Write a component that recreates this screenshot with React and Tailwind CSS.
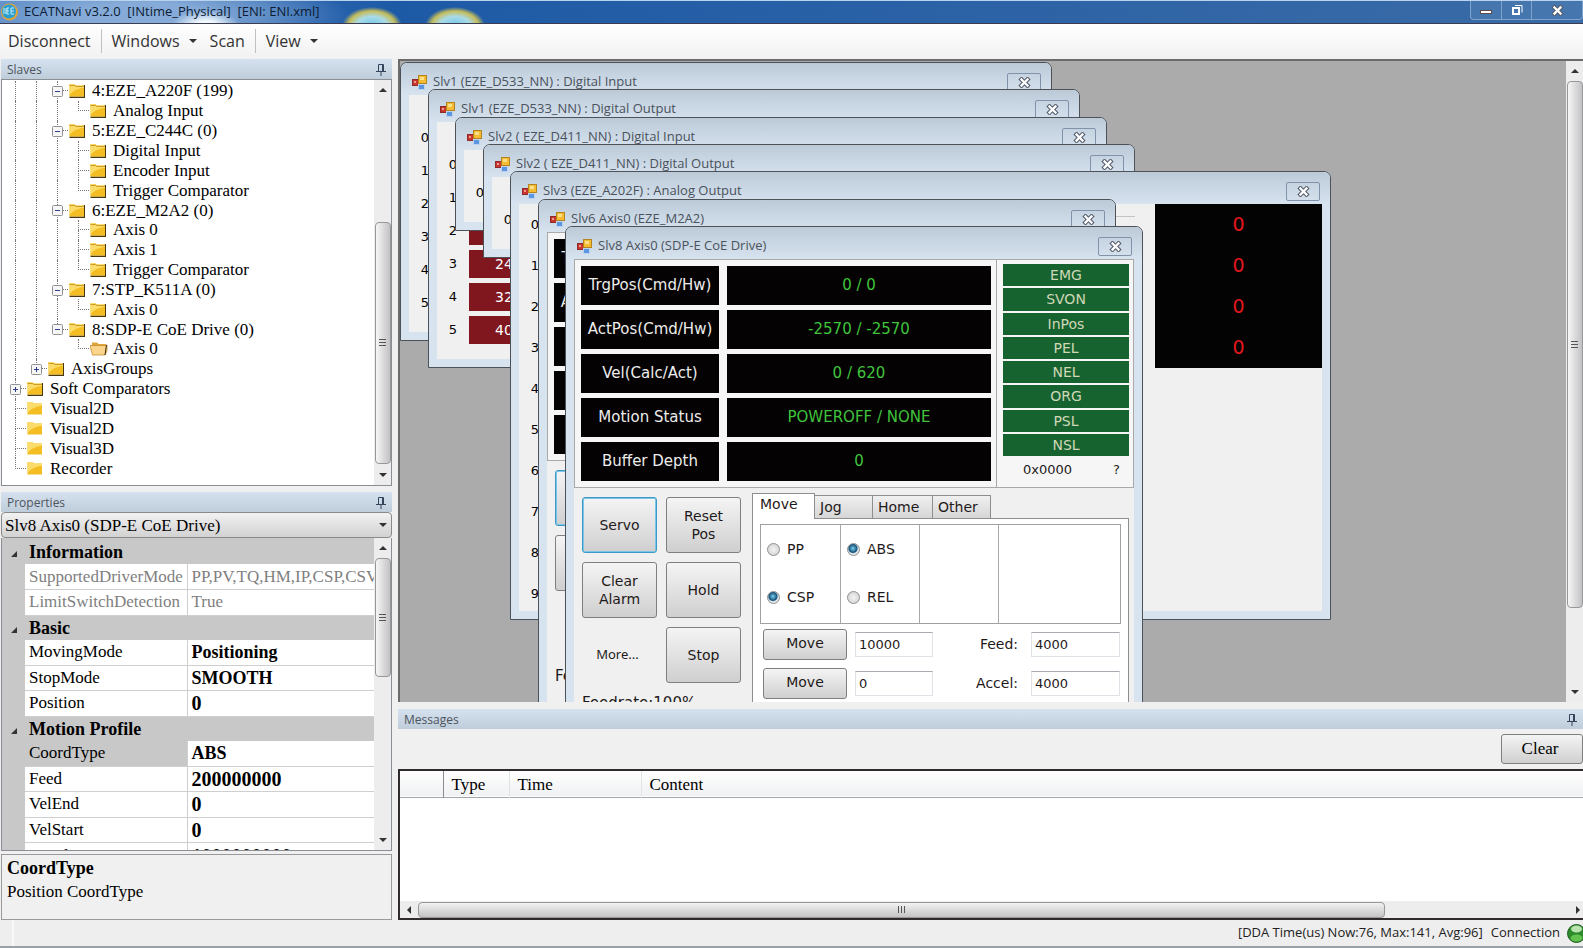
import { useId, useState } from 'react'
import clsx from 'clsx'

const TREE = [
  { lines: [1, 1], node: 'minus', label: '4:EZE_A220F (199)' },
  { lines: [1, 1, 1], node: 'last', label: 'Analog Input' },
  { lines: [1, 1], node: 'minus', label: '5:EZE_C244C (0)' },
  { lines: [1, 1, 1], node: 'mid', label: 'Digital Input' },
  { lines: [1, 1, 1], node: 'mid', label: 'Encoder Input' },
  { lines: [1, 1, 1], node: 'last', label: 'Trigger Comparator' },
  { lines: [1, 1], node: 'minus', label: '6:EZE_M2A2 (0)' },
  { lines: [1, 1, 1], node: 'mid', label: 'Axis 0' },
  { lines: [1, 1, 1], node: 'mid', label: 'Axis 1' },
  { lines: [1, 1, 1], node: 'last', label: 'Trigger Comparator' },
  { lines: [1, 1], node: 'minus', label: '7:STP_K511A (0)' },
  { lines: [1, 1, 1], node: 'last', label: 'Axis 0' },
  { lines: [1, 1], node: 'minus', last: true, label: '8:SDP-E CoE Drive (0)' },
  { lines: [1, 1, 0], node: 'last', icon: 'open', label: 'Axis 0' },
  { lines: [1], node: 'plus', last: true, label: 'AxisGroups' },
  { lines: [], node: 'plus', label: 'Soft Comparators' },
  { lines: [], node: 'mid', icon: 'flat', label: 'Visual2D' },
  { lines: [], node: 'mid', icon: 'flat', label: 'Visual2D' },
  { lines: [], node: 'mid', icon: 'flat', label: 'Visual3D' },
  { lines: [], node: 'last', icon: 'flat', label: 'Recorder' },
]

const PROPERTIES = [
  { group: 'Information' },
  { name: 'SupportedDriverMode', value: 'PP,PV,TQ,HM,IP,CSP,CSV', readOnly: true },
  { name: 'LimitSwitchDetection', value: 'True', readOnly: true },
  { group: 'Basic' },
  { name: 'MovingMode', value: 'Positioning' },
  { name: 'StopMode', value: 'SMOOTH' },
  { name: 'Position', value: 0 },
  { group: 'Motion Profile' },
  { name: 'CoordType', value: 'ABS', selected: true },
  { name: 'Feed', value: 200000000 },
  { name: 'VelEnd', value: 0 },
  { name: 'VelStart', value: 0 },
  { name: 'Accel', value: 1000000000 },
]

const READOUTS = [
  ['TrgPos(Cmd/Hw)', '0 / 0'],
  ['ActPos(Cmd/Hw)', '-2570 / -2570'],
  ['Vel(Calc/Act)', '0 / 620'],
  ['Motion Status', 'POWEROFF / NONE'],
  ['Buffer Depth', '0'],
]

const SIGNALS = ['EMG', 'SVON', 'InPos', 'PEL', 'NEL', 'ORG', 'PSL', 'NSL']

const PinIcon = () => (
  <svg width="10" height="13" viewBox="0 0 10 13" fill="none" stroke="#33435c" aria-hidden>
    <path d="M2.5 8V1.5h5V8M0 8.5h10M5 9v4" />
    <path d="M6.5 2v6" />
  </svg>
)

const FormIcon = () => (
  <svg width="16" height="15" viewBox="0 0 16 15" aria-hidden>
    <rect x="0.5" y="4.5" width="6" height="6" fill="#c8352f" stroke="#8e2a2a" />
    <rect x="2" y="6" width="2" height="2" fill="#ee9a8c" />
    <rect x="6.5" y="9.5" width="6" height="5" fill="#5b96e0" stroke="#bcd2ee" />
    <rect x="6.5" y="0.5" width="8" height="8" fill="#f5bc33" stroke="#b38420" />
    <rect x="8" y="2" width="4" height="3" fill="#fbe08a" />
  </svg>
)

const CloseGlyph = () => (
  <svg width="13" height="11" viewBox="0 0 13 11" aria-hidden>
    <path d="M3.500 2.500l6 6M9.500 2.500l-6 6" stroke="#555c6b" strokeWidth="4.400" strokeLinecap="square" />
    <path d="M3.500 2.500l6 6M9.500 2.500l-6 6" stroke="#fff" strokeWidth="2.300" strokeLinecap="square" />
  </svg>
)

const FolderIcon = ({ kind }) => {
  if (kind === 'open') {
    return (
      <svg width="18" height="15" viewBox="0 0 18 15" aria-hidden>
        <path d="M2 3V1.500h5L8.500 3H16v10H3z" fill="#e0a63c" />
        <path d="M0 4.500h14.500L17 4v6l-2 4H2.500z" fill="#f9d48a" stroke="#c58b2c" strokeWidth="0.8" />
        <path d="M16.500 4L15 14" stroke="#3a2c10" />
      </svg>
    )
  }
  return (
    <svg width="16" height="15" viewBox="0 0 16 15" aria-hidden>
      {kind !== 'flat' && <path d="M0.500 14.200h15V2" fill="none" stroke="#4a380c" strokeWidth="1.400" />}
      <path d="M0.500 1h5l1 1.500H15v11H0.500z" fill="#f4bd22" />
      <path d="M0.500 1h5l1 1.500H15V5C10 5 5 7 0.500 12z" fill="#fbdc6a" />
      {kind !== 'flat' && <path d="M0.500 2.500h5L7 3.500h8" fill="none" stroke="#c08a14" strokeWidth="0.800" />}
    </svg>
  )
}

const Triangle = ({ dir, className }) => {
  const paths = {
    up: 'M0 6L4 2L8 6z',
    down: 'M0 2L4 6L8 2z',
    left: 'M6 0L2 4L6 8z',
    right: 'M2 0L6 4L2 8z',
    corner: 'M7 1V7H1z',
  }
  return (
    <svg width="8" height="8" viewBox="0 0 8 8" fill="#333" className={className} aria-hidden>
      <path d={paths[dir]} />
    </svg>
  )
}

const Grip = ({ vertical }) => (
  <span
    className={clsx(
      'flex gap-[2px] [&>i]:bg-[#555]',
      vertical ? 'flex-col [&>i]:h-px [&>i]:w-[7px]' : '[&>i]:h-[7px] [&>i]:w-px',
    )}
  >
    <i />
    <i />
    <i />
  </span>
)

// thumb position is given as flex weights: space before, thumb, space after
const VScroll = ({ before, thumb, after }) => (
  <div className="flex w-[17px] shrink-0 flex-col items-center bg-[#ededee]" aria-hidden>
    <span className="flex h-5 items-center">
      <Triangle dir="up" />
    </span>
    <span style={{ flexGrow: before }} />
    <span
      style={{ flexGrow: thumb }}
      className="flex w-4 items-center justify-center rounded-sm border border-[#979797] bg-linear-to-r from-[#f6f6f6] via-[#dcdcde] to-[#c2c2c6]"
    >
      <Grip vertical />
    </span>
    <span style={{ flexGrow: after }} />
    <span className="flex h-5 items-center">
      <Triangle dir="down" />
    </span>
  </div>
)

const DockHeader = ({ title }) => (
  <div className="flex h-5 shrink-0 items-center justify-between bg-linear-to-b from-[#d5e1ee] to-[#bfcddb] px-[6px] pt-px font-['Open_Sans',sans-serif] text-[12px] text-[#4c545e]">
    <h2>{title}</h2>
    <button type="button" aria-label={`Pin ${title}`}>
      <PinIcon />
    </button>
  </div>
)

const TitleBar = () => (
  <header className="relative flex h-[24px] shrink-0 items-center overflow-hidden border-t border-b border-t-[#b9d3ee] border-b-[#3b3b52] bg-linear-to-r from-[#4d80bf] via-[#1d5aa6] via-25% to-[#3a6ba6] pl-px">
    <div
      className="absolute inset-0 bg-[radial-gradient(ellipse_34px_16px_at_206px_25px,#f2f9fd_30%,transparent),radial-gradient(ellipse_210px_40px_at_140px_14px,#86abd8_30%,transparent),radial-gradient(ellipse_30px_19px_at_372px_25px,#6fc3e6,#a9dbe8_50%,#c4bd5c_78%,transparent),radial-gradient(ellipse_30px_19px_at_455px_25px,#6fc3e6,#a9dbe8_50%,#c4bd5c_78%,transparent)]"
      aria-hidden
    />
    <svg width="17" height="20" viewBox="0 0 17 20" className="relative" aria-hidden>
      <circle cx="8.500" cy="10" r="8.500" fill="#e0a53a" />
      <circle cx="8" cy="9.500" r="7" fill="#2a9fd0" />
      <path d="M3 6v6M5 6v6M8 6h-2v6h2M6 9h2M13 6h-3v6h3M10 9h3" stroke="#c7ecf8" fill="none" />
    </svg>
    <h1 className="relative ml-[6px] flex-1 whitespace-pre font-['Open_Sans',sans-serif] text-[13px] text-[#0c1c33]">
      {'ECATNavi v3.2.0  [INtime_Physical]  [ENI: ENI.xml]'}
    </h1>
    <div className="relative flex h-[19px] self-start rounded-b border-x border-b border-[#7fa3cf] bg-[#4576ae]">
      <button type="button" aria-label="Minimize" className="flex w-[31px] items-center justify-center border-r border-[#7fa3cf]">
        <span className="mt-1 h-[4px] w-3 border border-[#5f4a4a] bg-white" />
      </button>
      <button type="button" aria-label="Restore" className="flex w-[30px] items-center justify-center border-r border-[#7fa3cf]">
        <svg width="12" height="12" viewBox="0 0 12 12" fill="none" aria-hidden>
          <path d="M4 1.500h7v7" stroke="#fff" />
          <rect x="2" y="4" width="6" height="6" stroke="#fff" strokeWidth="2" />
        </svg>
      </button>
      <button type="button" aria-label="Close" className="flex w-[50px] items-center justify-center">
        <CloseGlyph />
      </button>
    </div>
  </header>
)

const MenuBar = () => (
  <nav className="flex h-[35px] shrink-0 items-center bg-linear-to-b from-white to-[#f1f1f1] pb-[2px] pl-2 font-['Open_Sans',sans-serif] text-[16px] text-[#333]">
    <button type="button">Disconnect</button>
    <span className="mx-[10px] h-6 w-px bg-[#c0c0c0]" />
    <button type="button" className="flex items-center gap-[9px]">
      Windows
      <Triangle dir="down" />
    </button>
    <button type="button" className="ml-[13px]">Scan</button>
    <span className="mx-[10px] h-6 w-px bg-[#c0c0c0]" />
    <button type="button" className="flex items-center gap-[9px]">
      View
      <Triangle dir="down" />
    </button>
  </nav>
)

const Branch = ({ node, last }) => (
  <span className="relative flex w-[21px] flex-col pl-[10px]">
    <span className="flex-1 border-b border-l border-dotted border-[#777]" />
    <span className={clsx('flex-1', node !== 'last' && !last && 'border-l border-dotted border-[#777]')} />
    {(node === 'minus' || node === 'plus') && (
      <svg width="11" height="11" viewBox="0 0 11 11" className="absolute left-[5px] top-[5px]" aria-hidden>
        <rect x="0.500" y="0.500" width="10" height="10" rx="1" fill="#f6f6f6" stroke="#919191" />
        <path d={node === 'minus' ? 'M3 5.500h5' : 'M3 5.500h5M5.500 3v5'} stroke="#2c3f8f" />
      </svg>
    )}
  </span>
)

const TreeRow = ({ lines, node, last, icon, label }) => (
  <li className="flex min-h-0">
    {lines.map((on, i) => (
      <span key={i} className="flex w-[21px] pl-[10px]">
        <span className={clsx('flex-1', on === 1 && 'border-l border-dotted border-[#777]')} />
      </span>
    ))}
    <Branch node={node} last={last} />
    <button type="button" className="flex items-center whitespace-nowrap">
      <span className="flex w-[24px] pl-px">
        <FolderIcon kind={icon} />
      </span>
      {label}
    </button>
  </li>
)

const SlavesPanel = () => (
  <section className="flex min-h-0 flex-1 flex-col">
    <DockHeader title="Slaves" />
    <div className="flex min-h-0 flex-1 border border-[#8a8f96] bg-white">
      <ul className="mt-px grid h-[397px] flex-1 auto-rows-fr pl-[3px] text-[17px] leading-[19px]">
        {TREE.map((row, i) => (
          <TreeRow key={i} {...row} />
        ))}
      </ul>
      <VScroll before={126} thumb={241} after={1} />
    </div>
  </section>
)

const PropertyGrid = () => (
  <div className="flex h-[313px] overflow-hidden border border-t-0 border-[#8a8f96]">
    <div className="min-w-0 flex-1 overflow-hidden bg-[#c8c8c8] pt-[2px]">
      <table className="h-[329px] w-full table-fixed border-collapse text-[17px] leading-[22px]">
        <colgroup>
          <col className="w-[23px]" />
          <col className="w-[162px]" />
          <col />
        </colgroup>
        <tbody>
          {PROPERTIES.map((p) =>
            p.group ? (
              <tr key={p.group} className="bg-[#c8c8c8]">
                <td className="p-0">
                  <Triangle dir="corner" className="ml-[8px] mt-1" />
                </td>
                <th colSpan={2} className="p-0 pl-[4px] text-left text-[18px] font-bold">{p.group}</th>
              </tr>
            ) : (
              <tr key={p.name} className={clsx('bg-white', p.readOnly && 'text-[#808080]')}>
                <td className="bg-[#c8c8c8] p-0" />
                <th
                  className={clsx(
                    'overflow-hidden border-b border-r border-[#cfcfcf] p-0 pl-[4px] text-left font-normal',
                    p.selected && 'bg-[#c8c8c8]',
                  )}
                >
                  {p.name}
                </th>
                <td
                  className={clsx(
                    'overflow-hidden whitespace-nowrap border-b border-[#cfcfcf] p-0 pl-[4px]',
                    !p.readOnly && 'font-bold',
                    typeof p.value === 'number' ? 'text-[20px]' : !p.readOnly && 'text-[18px]',
                  )}
                >
                  {p.value}
                </td>
              </tr>
            ),
          )}
        </tbody>
      </table>
    </div>
    <VScroll before={0} thumb={114} after={158} />
  </div>
)

const PropertiesPanel = () => (
  <section className="mt-[6px] flex shrink-0 flex-col">
    <DockHeader title="Properties" />
    <div className="relative">
      <select
        aria-label="Object"
        className="block h-[26px] w-full appearance-none rounded-sm border border-[#8a8a8a] bg-linear-to-b from-[#f2f2f2] to-[#d2d2d2] pl-[3px] text-[17px]"
      >
        <option>Slv8 Axis0 (SDP-E CoE Drive)</option>
      </select>
      <Triangle dir="down" className="pointer-events-none absolute right-[5px] top-[9px]" />
    </div>
    <PropertyGrid />
    <div className="mt-[3px] h-[66px] border border-[#9a9a9a] bg-[#f0f0f0] pl-[5px] pt-px text-[17px] leading-6">
      <p className="text-[18px] font-bold">CoordType</p>
      <p>Position CoordType</p>
    </div>
  </section>
)

const MdiWindow = ({ title, className, children }) => (
  <article
    className={clsx(
      'absolute flex flex-col overflow-hidden rounded-t-[7px] border border-[#4d5259] bg-[#d7e3ef] px-2 pb-2',
      className,
    )}
  >
    <header className="-mx-2 flex h-8 shrink-0 items-center bg-linear-to-b from-[#bccad8] to-[#d7e3ef] pl-[11px] pr-[10px] pt-[6px]">
      <FormIcon />
      <h3 className="ml-[5px] flex-1 font-['Open_Sans',sans-serif] text-[13px] text-[#4a525c]">{title}</h3>
      <button
        type="button"
        aria-label="Close"
        className="flex h-[19px] w-[34px] items-center justify-center rounded-xs border border-[#8193ab]"
      >
        <CloseGlyph />
      </button>
    </header>
    <div className="min-h-0 flex-1 overflow-hidden bg-[#f0f0f0]">{children}</div>
  </article>
)

// one row per byte; outputs also show the first bit number of each byte
const IoPanel = ({ rows, output }) => (
  <div className="pt-[26px] font-['DejaVu_Sans',sans-serif] text-[13px]">
    {Array.from({ length: rows }, (_, r) => (
      <div key={r} className="flex h-[33px] items-center">
        <span className="w-8 text-center">{r}</span>
        {output && (
          <span className="h-[28px] w-[70px] bg-[#80171f] text-center text-[14px] leading-7 text-white">
            {r > 2 && r * 8}
          </span>
        )}
      </div>
    ))}
  </div>
)

const AnalogPanel = () => (
  <div className="flex items-start font-['DejaVu_Sans',sans-serif]">
    <ol className="w-[32px] text-center text-[13px] leading-[41px]">
      {Array.from({ length: 10 }, (_, i) => (
        <li key={i}>{i}</li>
      ))}
    </ol>
    <hr className="ml-auto mr-5 mt-3 w-[570px] border-[#c4c4c4]" />
    <ul className="w-[167px] bg-[#040303] text-center text-[19px] leading-[41px] text-[#e3171d]">
      <li>0</li>
      <li>0</li>
      <li>0</li>
      <li>0</li>
    </ul>
  </div>
)

const PushButton = ({ focused, className, children }) => (
  <button
    type="button"
    className={clsx(
      'rounded-[3px] border bg-linear-to-b from-[#f4f4f4] from-0% via-[#e2e2e2] to-[#cfcfcf] leading-[18px]',
      focused ? 'border-[#3c9ac9] shadow-[inset_0_0_0_1px_#7cc4e6]' : 'border-[#7f7f7f]',
      className,
    )}
  >
    {children}
  </button>
)

const RadioColumn = ({ options, selected }) => {
  const name = useId()
  return (
    <div className="flex flex-col gap-[32px] border-r border-[#a8a8a8] pl-[6px] pt-4 last:border-r-0">
      {options.map((option) => (
        <label key={option} className="flex h-4 items-center gap-[7px]">
          <input
            type="radio"
            name={name}
            defaultChecked={option === selected}
            className="size-[13px] appearance-none rounded-full border border-[#8e8f8f] bg-[radial-gradient(circle,#f4f4f4,#cdcdcd)] checked:bg-[radial-gradient(circle_at_45%_40%,#7ed0ee_0,#14527c_45%,#dfe6ea_58%)]"
          />
          {option}
        </label>
      ))}
    </div>
  )
}

const MoveRow = ({ target, label, value }) => {
  const id = useId()
  return (
    <div className="flex h-[31px] items-center">
      <PushButton className="h-[31px] w-[84px] pb-[3px]">Move</PushButton>
      <input
        aria-label="Target position"
        defaultValue={target}
        className="ml-2 h-[25px] w-[78px] border border-[#dfe3e8] border-t-[#a9abb2] bg-white px-[3px] text-[13px]"
      />
      <label htmlFor={id} className="flex-1 text-right">{label}</label>
      <input
        id={id}
        defaultValue={value}
        className="ml-[13px] h-[25px] w-[89px] border border-[#dfe3e8] border-t-[#a9abb2] bg-white px-[3px] text-[13px]"
      />
    </div>
  )
}

const TABS = [
  { name: 'Move', width: 'w-[63px]' },
  { name: 'Jog', width: 'w-[58px]' },
  { name: 'Home', width: 'w-[60px]' },
  { name: 'Other', width: 'w-[58px]' },
]

const MotionTabs = () => {
  const [tab, setTab] = useState('Move')
  return (
    <div className="mr-[5px] flex-1">
      <div role="tablist" className="flex h-[25px] items-end">
        {TABS.map(({ name, width }) => (
          <button
            key={name}
            type="button"
            role="tab"
            aria-selected={tab === name}
            onClick={() => setTab(name)}
            className={clsx(
              'border border-b-0 border-[#8e8e8e] text-left',
              width,
              tab === name
                ? 'relative -mb-px h-[26px] bg-white pb-1 pl-[7px]'
                : 'h-[23px] border-l-0 bg-linear-to-b from-[#f0f0f0] to-[#d6d6d6] pl-[5px]',
            )}
          >
            {name}
          </button>
        ))}
      </div>
      <div className="h-[230px] border border-[#8e8e8e] bg-white px-[5px] pt-[5px]">
        <div className="mx-[2px] grid h-[100px] grid-cols-[80px_79px_79px_1fr] border border-[#a0a0a0]">
          <RadioColumn options={['PP', 'CSP']} selected="CSP" />
          <RadioColumn options={['ABS', 'REL']} selected="ABS" />
          <RadioColumn options={[]} />
          <RadioColumn options={[]} />
        </div>
        <div className="mt-[5px] flex flex-col gap-2 pl-[5px] pr-[3px]">
          <MoveRow target="10000" label="Feed:" value="4000" />
          <MoveRow target="0" label="Accel:" value="4000" />
        </div>
      </div>
    </div>
  )
}

const SignalColumn = () => (
  <div className="flex w-[136px] flex-col pl-[6px] pr-[4px] pt-1">
    <ul className="grid h-[192px] auto-rows-fr gap-[2px] text-center leading-[23px] text-[#cfd8b8]">
      {SIGNALS.map((s) => (
        <li key={s} className="bg-[#17632f]">{s}</li>
      ))}
    </ul>
    <div className="flex flex-1 items-center justify-between pb-1 pl-[20px] pr-[9px] text-[13px]">
      <span>0x0000</span>
      <span>?</span>
    </div>
  </div>
)

// a covered window only draws the strip that peeks out on its left side
const AxisPanel = ({ covered }) => (
  <div className="font-['DejaVu_Sans',sans-serif] text-[14px] text-[#1f1a1a]">
    <div className="flex h-[229px] border border-[#a9a9a9] bg-[#f6f6f6]">
      <div className="grid flex-1 grid-cols-[138px_1fr] grid-rows-5 gap-x-2 gap-y-[5px] border-r border-[#a9a9a9] py-[6px] pl-[6px] pr-[5px] text-[15px]">
        {READOUTS.map(([name, value], i) => (
          <div key={name} className="contents">
            <span className="flex items-center justify-center bg-[#050203] text-[#ececec]">
              {(!covered || i < 2) && name}
            </span>
            <output className="flex items-center justify-center bg-[#050203] text-[#3fc43c]">{!covered && value}</output>
          </div>
        ))}
      </div>
      {!covered && <SignalColumn />}
    </div>
    <div className="flex pt-[5px]">
      <div className="w-[178px] pl-2 pt-1">
        <div className="grid auto-rows-[56px] grid-cols-[75px_75px] gap-[9px]">
          <PushButton focused>{!covered && 'Servo'}</PushButton>
          <PushButton>{!covered && <>Reset<br />Pos</>}</PushButton>
          <PushButton>{!covered && <>Clear<br />Alarm</>}</PushButton>
          <PushButton>{!covered && 'Hold'}</PushButton>
          <button type="button" className="pr-1 font-['Noto_Sans',sans-serif] text-[13px]">{!covered && 'More...'}</button>
          <PushButton>{!covered && 'Stop'}</PushButton>
        </div>
        <p className="mt-[9px] whitespace-nowrap text-[15px]">Feedrate:100%</p>
      </div>
      {!covered && <MotionTabs />}
    </div>
  </div>
)

const MdiArea = () => (
  <main className="flex min-h-0 flex-1 border-l-2 border-t-2 border-[#6b6b6b]">
    <div className="relative min-w-0 flex-1 overflow-hidden bg-[#ababab]">
      <MdiWindow title="Slv1 (EZE_D533_NN) : Digital Input" className="left-0 top-[1px] h-[279px] w-[652px]">
        <IoPanel rows={6} />
      </MdiWindow>
      <MdiWindow title="Slv1 (EZE_D533_NN) : Digital Output" className="left-[28px] top-[28px] h-[279px] w-[652px]">
        <IoPanel rows={6} output />
      </MdiWindow>
      <MdiWindow title="Slv2 ( EZE_D411_NN) : Digital Input" className="left-[55px] top-[56px] h-[114px] w-[652px]">
        <IoPanel rows={1} />
      </MdiWindow>
      <MdiWindow title="Slv2 ( EZE_D411_NN) : Digital Output" className="left-[83px] top-[83px] h-[114px] w-[652px]">
        <IoPanel rows={1} />
      </MdiWindow>
      <MdiWindow title="Slv3 (EZE_A202F) : Analog Output" className="left-[110px] top-[110px] h-[449px] w-[821px]">
        <AnalogPanel />
      </MdiWindow>
      <MdiWindow title="Slv6 Axis0 (EZE_M2A2)" className="left-[138px] top-[138px] h-[540px] w-[578px]">
        <AxisPanel covered />
      </MdiWindow>
      <MdiWindow title="Slv8 Axis0 (SDP-E CoE Drive)" className="left-[165px] top-[165px] h-[540px] w-[578px]">
        <AxisPanel />
      </MdiWindow>
    </div>
    <VScroll before={0} thumb={526} after={75} />
  </main>
)

const MessagesPanel = () => (
  <section className="mt-[7px] flex h-[211px] shrink-0 flex-col">
    <DockHeader title="Messages" />
    <div className="flex h-10 items-center justify-end">
      <PushButton className="h-[30px] w-[82px] pr-1 text-[17px]">Clear</PushButton>
    </div>
    <div className="flex min-h-0 flex-1 flex-col border-2 border-r-0 border-[#2f2b2b] bg-white">
      <table className="w-full table-fixed border-collapse text-left text-[17px]">
        <colgroup>
          <col className="w-[43px]" />
          <col className="w-[66px]" />
          <col className="w-[132px]" />
          <col />
        </colgroup>
        <thead>
          <tr className="h-[26px] border-b border-[#a3a6aa] bg-linear-to-b from-white to-[#f0f1f3] leading-5">
            <th className="border-r border-[#8d8d8d] p-0" />
            <th className="border-r border-[#e2e3e5] p-0 pl-2 pt-[3px] font-normal">Type</th>
            <th className="border-r border-[#e2e3e5] p-0 pl-2 pt-[3px] font-normal">Time</th>
            <th className="p-0 pl-2 pt-[3px] font-normal">Content</th>
          </tr>
        </thead>
        <tbody />
      </table>
      <div className="mt-auto flex h-[17px] items-center bg-[#ededed]" aria-hidden>
        <Triangle dir="left" className="mx-[5px]" />
        <span className="flex h-4 grow-[960] items-center justify-center rounded-sm border border-[#979797] bg-linear-to-b from-[#f2f2f2] to-[#c4c4c4]">
          <Grip />
        </span>
        <span className="grow-[190]" />
        <Triangle dir="right" className="mr-px" />
      </div>
    </div>
  </section>
)

const StatusBar = () => (
  <footer className="flex h-[28px] shrink-0 items-center justify-end overflow-hidden border-b-2 border-[#98a0a8] bg-[#efeeee] pl-3 font-['Open_Sans',sans-serif] text-[13px] text-[#222]">
    <span className="mr-auto h-full w-[2px] bg-[#f8f8f8]" />
    <span>[DDA Time(us) Now:76, Max:141, Avg:96]</span>
    <span className="ml-2">Connection</span>
    <svg width="16" height="19" viewBox="0 0 16 19" className="ml-[7px]" aria-hidden>
      <circle cx="9.500" cy="9.500" r="9" fill="#2c8a2a" stroke="#1f5c20" />
      <ellipse cx="9.500" cy="14" rx="6" ry="3.500" fill="#62c34e" />
      <ellipse cx="9.500" cy="5" rx="5.500" ry="3.500" fill="#b8e2ae" />
    </svg>
  </footer>
)

export default function App() {
  return (
    <div className="flex h-screen min-h-[900px] flex-col overflow-hidden bg-[#f0f0f0] font-['Liberation_Serif',serif] text-black">
      <TitleBar />
      <MenuBar />
      <div className="flex min-h-0 flex-1">
        <aside className="flex w-[392px] shrink-0 flex-col pl-px">
          <SlavesPanel />
          <PropertiesPanel />
        </aside>
        <div className="ml-[6px] flex min-w-0 flex-1 flex-col">
          <MdiArea />
          <MessagesPanel />
        </div>
      </div>
      <StatusBar />
    </div>
  )
}
